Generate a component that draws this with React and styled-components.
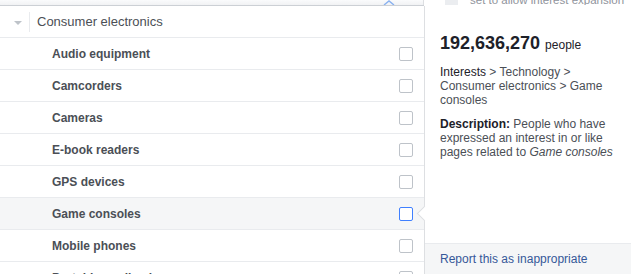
import React from "react";
import styled, { createGlobalStyle } from "styled-components";

const Global = createGlobalStyle`
*{
  box-sizing: border-box;
}
body{
  margin: 0;
  background: #fff;
  font-family: 'Liberation Sans', Arial, sans-serif;
}
`

const Page = styled.div`
width: 631px;
height: 274px;
overflow: hidden;
display: flex;
flex-direction: column;
`

const TopStrip = styled.div`
height: 5px;
flex: none;
display: flex;
overflow: hidden;
`

const TopLeft = styled.div`
width: 424px;
display: flex;
justify-content: flex-end;
padding-right: 28px;
border-right: 1px solid #dddfe2;
background: linear-gradient(#fafbfc, #f1f2f4);
`

const TopRight = styled.div`
flex: 1;
display: flex;
align-items: flex-start;
gap: 12px;
padding-left: 21px;
`

const GreySquare = styled.div`
width: 13px;
height: 5px;
background: #ebedf0;
`

const BehindText = styled.div`
margin-top: -7px;
font-size: 11.5px;
line-height: 14px;
color: #90949c;
white-space: nowrap;
`

const Main = styled.div`
flex: 1;
display: flex;
min-height: 0;
`

const List = styled.div`
width: 424px;
flex: none;
border-top: 1px solid #ccd0d5;
box-shadow: inset 0 1px 1px rgba(0,0,0,0.04);
`

const Row = styled.div`
height: 32px;
display: flex;
align-items: center;
padding: 0 11px 0 ${props => props.header ? '14px' : '52px'};
border-bottom: 1px solid #e9ebee;
background: ${props => props.active ? '#f5f6f7' : '#fff'};
`

const Caret = styled.div`
width: 0;
height: 0;
border-left: 4px solid transparent;
border-right: 4px solid transparent;
border-top: 4px solid #bec3c9;
margin-top: 2px;
`

const Divider = styled.div`
width: 1px;
height: 20px;
background: #e9ebee;
margin: 0 7px 0 7px;
`

const HeaderLabel = styled.span`
font-size: 13px;
color: #4b4f56;
`

const ItemLabel = styled.span`
flex: 1;
font-size: 12px;
font-weight: bold;
color: #4b4f56;
`

const Check = styled.div`
width: 14px;
height: 14px;
border-radius: 2px;
border: 1px solid ${props => props.active ? '#4080ff' : '#bec3c9'};
background: #fff;
`

const Popup = styled.div`
flex: 1;
position: relative;
display: flex;
flex-direction: column;
border-left: 1px solid #dddfe2;
background: #fff;
margin-top: 1px;
`

const Arrow = styled.div`
position: absolute;
left: -6px;
top: 202px;
width: 11px;
height: 11px;
background: #fff;
border-left: 1px solid #dddfe2;
border-bottom: 1px solid #dddfe2;
transform: rotate(45deg);
`

const Body = styled.div`
padding: 27px 16px 0 15px;
`

const Count = styled.div`
display: flex;
align-items: baseline;
gap: 5px;
margin-bottom: 11px;
`

const Number = styled.span`
font-size: 18px;
font-weight: bold;
color: #1d2129;
`

const Small = styled.span`
font-size: 12px;
color: #1d2129;
`

const Para = styled.p`
margin: 0 0 10px 0;
font-size: 12px;
line-height: 14px;
color: #4b4f56;
`

const Strong = styled.span`
color: #1d2129;
font-weight: ${props => props.bold ? 'bold' : 'normal'};
`

const Footer = styled.div`
margin-top: auto;
height: 31px;
display: flex;
align-items: center;
padding-left: 15px;
background: #f5f6f7;
border-top: 1px solid #e9ebee;
font-size: 12px;
color: #365899;
`

const items = ['Audio equipment', 'Camcorders', 'Cameras', 'E-book readers', 'GPS devices', 'Game consoles', 'Mobile phones', 'Portable media players'];

function App() {
  return (
    <Page>
      <Global />
      <TopStrip>
        <TopLeft>
          <svg width="12" height="5" viewBox="0 0 12 5">
            <polyline points="1,5 6,1 11,5" fill="none" stroke="#8ab2f0" strokeWidth="1.4" />
          </svg>
        </TopLeft>
        <TopRight>
          <GreySquare />
          <BehindText>set to allow interest expansion</BehindText>
        </TopRight>
      </TopStrip>
      <Main>
        <List>
          <Row header>
            <Caret />
            <Divider />
            <HeaderLabel>Consumer electronics</HeaderLabel>
          </Row>
          {items.map(item => (
            <Row key={item} active={item === 'Game consoles'}>
              <ItemLabel>{item}</ItemLabel>
              <Check active={item === 'Game consoles'} />
            </Row>
          ))}
        </List>
        <Popup>
          <Arrow />
          <Body>
            <Count>
              <Number>192,636,270</Number>
              <Small>people</Small>
            </Count>
            <Para>
              <Strong>Interests</Strong> &gt; Technology &gt; Consumer electronics &gt; Game consoles
            </Para>
            <Para>
              <Strong bold>Description:</Strong> People who have expressed an interest in or like pages related to <i>Game consoles</i>
            </Para>
          </Body>
          <Footer>Report this as inappropriate</Footer>
        </Popup>
      </Main>
    </Page>
  );
}

export default App;
